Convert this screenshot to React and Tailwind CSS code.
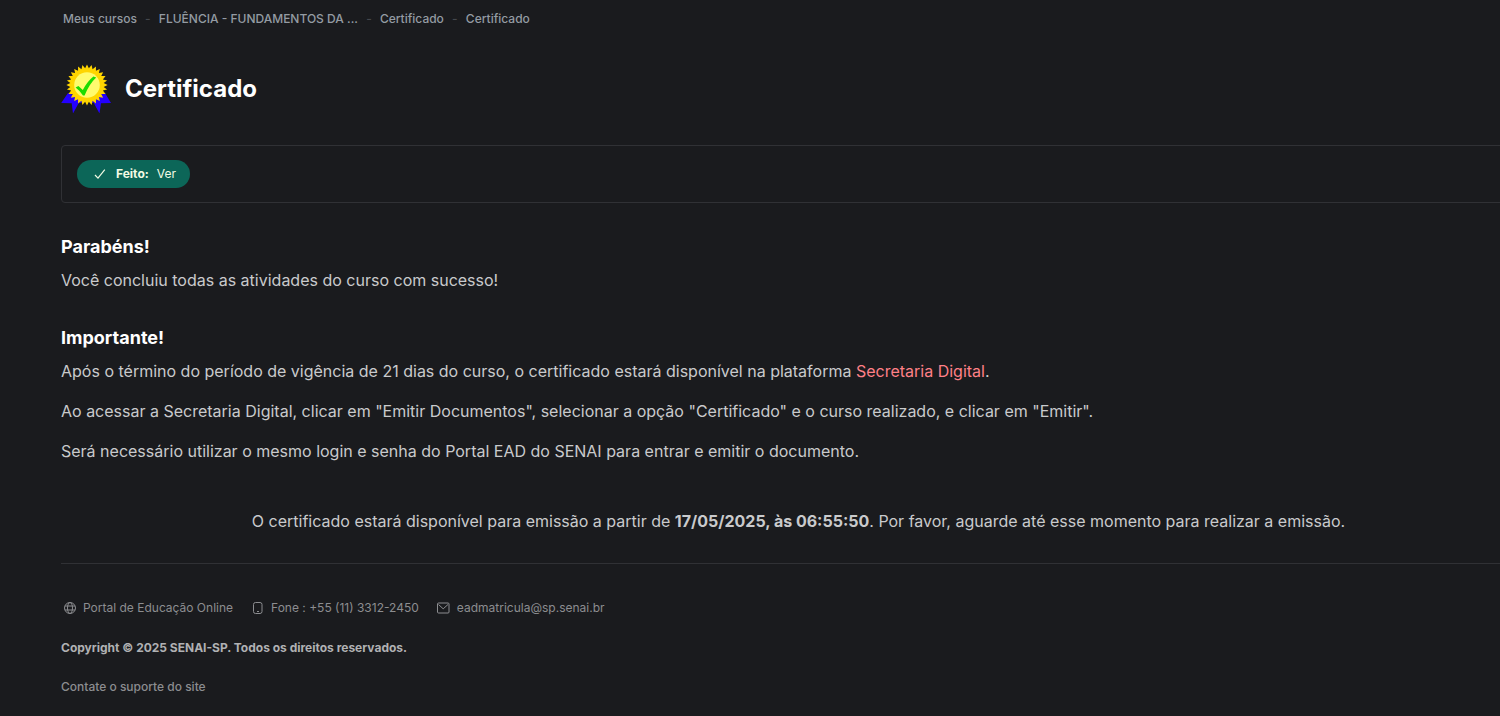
import React from "react";

const sealPoints = Array.from({ length: 56 }, (_, i) => {
  const r = i % 2 === 0 ? 20.6 : 16.8;
  const a = (i * Math.PI) / 28 - Math.PI / 2;
  return `${(26 + r * Math.cos(a)).toFixed(2)},${(22 + r * Math.sin(a)).toFixed(2)}`;
}).join(" ");

function Seal() {
  return (
    <svg className="size-[50px] shrink-0" viewBox="0 0 50 50" aria-hidden="true">
      <path
        fill="#2400ff"
        d="M0.2 40L7 30L24 36L20 40L18 39.5L12 50.5L10.7 40.2ZM50 40L44 30L27 36L30.7 40L32.5 39.5L38.5 50.5L40 40.2Z"
      />
      <polygon fill="#ffd500" points={sealPoints} />
      <circle cx="26" cy="22" r="12.8" fill="#fffb6e" />
      <path fill="#1ddc00" d="M14.6 24.6L17.4 22.9L21.8 27Q26 18.5 32.4 13.4L35.2 14.5Q28.2 21 23.6 32.4L22 32.4Q19 28 14.6 24.6Z" />
    </svg>
  );
}

function Icon({ children }) {
  return (
    <svg
      className="size-[14px] shrink-0"
      viewBox="0 0 14 14"
      fill="none"
      stroke="currentColor"
      strokeWidth="1"
      aria-hidden="true"
    >
      {children}
    </svg>
  );
}

const crumbs = ["Meus cursos", "FLUÊNCIA - FUNDAMENTOS DA ...", "Certificado", "Certificado"];

export default function App() {
  return (
    <div className="min-h-screen overflow-hidden bg-[#1a1b1e] font-['Inter',sans-serif] text-base leading-6 text-[#c9cacc]">
      <div className="-mr-9 pl-[61px]">
        <nav aria-label="Navegação" className="pt-[9px] pl-[2px]">
          <ol className="flex items-center text-xs leading-5 font-medium text-[#949ba3]">
            {crumbs.map((c, i) => (
              <li key={i} className="flex items-center">
                {i > 0 && <span className="w-[22px] text-center text-[#45484d]">-</span>}
                <a href="#">{c}</a>
              </li>
            ))}
          </ol>
        </nav>

        <header className="mt-[34px] flex items-center gap-[14px]">
          <Seal />
          <h1 className="pt-[2px] text-2xl font-bold text-white">Certificado</h1>
        </header>

        <div className="mt-8 rounded border border-[#303135] px-[15px] py-[14px]">
          <div className="inline-flex h-7 items-center rounded-full bg-[#0c6658] pr-[14px] pl-4 align-top text-xs text-[#f2fbe4]">
            <Icon>
              <path d="M2 8L5 11.2L11.8 2.6" strokeWidth="1.2" />
            </Icon>
            <strong className="ml-[9px] font-bold">Feito:</strong>
            <span className="ml-2">Ver</span>
          </div>
        </div>

        <main>
          <h2 className="mt-8 text-lg leading-6 font-bold text-white">Parabéns!</h2>
          <p className="mt-[9px]">Você concluiu todas as atividades do curso com sucesso!</p>
          <h2 className="mt-[34px] text-lg leading-6 font-bold text-white">Importante!</h2>
          <p className="mt-[9px]">
            Após o término do período de vigência de 21 dias do curso, o certificado estará disponível na plataforma{" "}
            <a href="#" className="text-[#ff8087]">Secretaria Digital</a>.
          </p>
          <p className="mt-4">
            Ao acessar a Secretaria Digital, clicar em "Emitir Documentos", selecionar a opção "Certificado" e o curso
            realizado, e clicar em "Emitir".
          </p>
          <p className="mt-4">
            Será necessário utilizar o mesmo login e senha do Portal EAD do SENAI para entrar e emitir o documento.
          </p>
          <p className="mt-[46px] text-center">
            O certificado estará disponível para emissão a partir de <strong className="font-bold">17/05/2025, às 06:55:50</strong>.
            Por favor, aguarde até esse momento para realizar a emissão.
          </p>
        </main>

        <footer className="mt-[30px] border-t border-[#303135] pt-[34px] text-xs leading-5 text-[#8c8d90]">
          <ul className="flex items-center gap-[18px] pl-[2px]">
            <li>
              <a href="#" className="flex items-center gap-[6px]">
                <Icon>
                  <circle cx="7" cy="7" r="5.5" />
                  <ellipse cx="7" cy="7" rx="2.5" ry="5.5" />
                  <path d="M2 5h10M2 9h10" />
                </Icon>
                Portal de Educação Online
              </a>
            </li>
            <li className="flex items-center gap-[6px]">
              <Icon>
                <rect x="2.5" y="1.5" width="8.5" height="11" rx="2" />
                <path d="M6 10.5h2" />
              </Icon>
              Fone : +55 (11) 3312-2450
            </li>
            <li>
              <a href="#" className="flex items-center gap-[6px]">
                <Icon>
                  <rect x="0.5" y="2" width="11.5" height="10" rx="1" />
                  <path d="M1.5 3.5L6.2 7.8L11 3.5" />
                </Icon>
                eadmatricula@sp.senai.br
              </a>
            </li>
          </ul>
          <p className="mt-5 font-bold text-[#b0b1b3]">Copyright © 2025 SENAI-SP. Todos os direitos reservados.</p>
          <a href="#" className="mt-[19px] inline-block font-medium">Contate o suporte do site</a>
        </footer>
      </div>
    </div>
  );
}
